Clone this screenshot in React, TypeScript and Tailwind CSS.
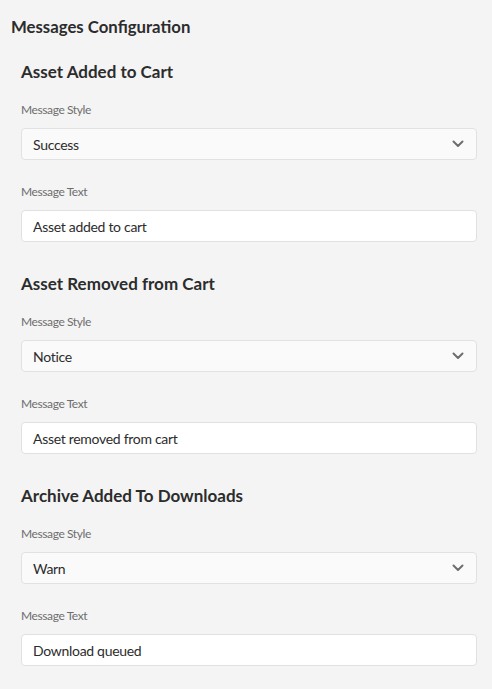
import { useState } from "react";

const sections = [
  { title: "Asset Added to Cart", style: "Success", text: "Asset added to cart" },
  { title: "Asset Removed from Cart", style: "Notice", text: "Asset removed from cart" },
  { title: "Archive Added To Downloads", style: "Warn", text: "Download queued" },
];

const Chevron = () => (
  <svg width="12" height="8" viewBox="0 0 12 8" fill="none">
    <path d="M1.5 1.5L6 6L10.5 1.5" stroke="#6e6e6e" strokeWidth="2" strokeLinecap="round" strokeLinejoin="round" />
  </svg>
);

const MessageSection = ({ title, style, text }: { title: string; style: string; text: string }) => {
  const [value, setValue] = useState(text);
  return (
    <div className="flex flex-col">
      <h2 className="text-[17px] leading-6 font-bold text-[#2c2c2c]">{title}</h2>
      <label className="mt-[18px] text-[12px] leading-4 tracking-[-0.4px] text-[#6e6e6e]">Message Style</label>
      <div className="mt-[10px] h-8 flex items-center justify-between rounded-[4px] border border-[#e1e1e1] bg-[#fafafa] pl-[11px] pr-[12px]">
        <span className="text-[14px] tracking-[-0.3px] text-[#2c2c2c]">{style}</span>
        <Chevron />
      </div>
      <label className="mt-6 text-[12px] leading-4 tracking-[-0.4px] text-[#6e6e6e]">Message Text</label>
      <input
        className="mt-[10px] h-8 rounded-[4px] border border-[#e1e1e1] bg-white px-[11px] text-[14px] tracking-[-0.3px] text-[#2c2c2c] outline-none"
        value={value}
        onChange={(e) => setValue(e.target.value)}
      />
    </div>
  );
};

export default function App() {
  return (
    <div className="min-h-screen w-full bg-[#f4f4f4] pt-[15px] pl-[11px] pr-[15px] pb-6" style={{ fontFamily: 'Lato, "Open Sans", sans-serif' }}>
      <h1 className="text-[16.75px] leading-6 font-bold text-[#2c2c2c]">Messages Configuration</h1>
      <div className="mt-[21px] pl-[10px] flex flex-col gap-[30px]">
        {sections.map((s) => (
          <MessageSection key={s.title} {...s} />
        ))}
      </div>
    </div>
  );
}
